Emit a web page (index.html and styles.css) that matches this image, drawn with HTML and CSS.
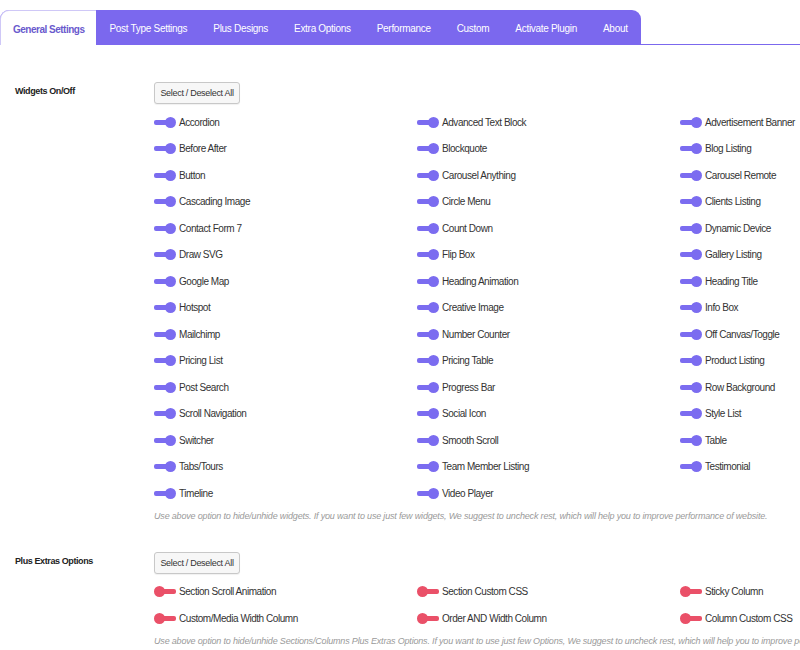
FILE: index.html
```html
<!DOCTYPE html>
<html lang="en">

<head>
  <meta charset="UTF-8">
  <meta name="viewport" content="width=device-width, initial-scale=1.0">
  <title>Plus Settings</title>
  <link rel="stylesheet" href="styles.css">
</head>

<body>
  <div class="wrap">
    <nav class="tabs">
      <ul>
        <li class="active"><a href="#general">General Settings</a></li>
        <li><a href="#post-type">Post Type Settings</a></li>
        <li><a href="#designs">Plus Designs</a></li>
        <li><a href="#extra">Extra Options</a></li>
        <li><a href="#performance">Performance</a></li>
        <li><a href="#custom">Custom</a></li>
        <li><a href="#activate">Activate Plugin</a></li>
        <li><a href="#about">About</a></li>
      </ul>
    </nav>

    <div class="section">
      <div class="section-label">Widgets On/Off</div>
      <div class="section-body">
        <button type="button" class="select-all">Select / Deselect All</button>
        <div class="switch-list">
          <label class="switch-item"><span class="toggle on"></span>Accordion</label>
          <label class="switch-item"><span class="toggle on"></span>Advanced Text Block</label>
          <label class="switch-item"><span class="toggle on"></span>Advertisement Banner</label>
          <label class="switch-item"><span class="toggle on"></span>Before After</label>
          <label class="switch-item"><span class="toggle on"></span>Blockquote</label>
          <label class="switch-item"><span class="toggle on"></span>Blog Listing</label>
          <label class="switch-item"><span class="toggle on"></span>Button</label>
          <label class="switch-item"><span class="toggle on"></span>Carousel Anything</label>
          <label class="switch-item"><span class="toggle on"></span>Carousel Remote</label>
          <label class="switch-item"><span class="toggle on"></span>Cascading Image</label>
          <label class="switch-item"><span class="toggle on"></span>Circle Menu</label>
          <label class="switch-item"><span class="toggle on"></span>Clients Listing</label>
          <label class="switch-item"><span class="toggle on"></span>Contact Form 7</label>
          <label class="switch-item"><span class="toggle on"></span>Count Down</label>
          <label class="switch-item"><span class="toggle on"></span>Dynamic Device</label>
          <label class="switch-item"><span class="toggle on"></span>Draw SVG</label>
          <label class="switch-item"><span class="toggle on"></span>Flip Box</label>
          <label class="switch-item"><span class="toggle on"></span>Gallery Listing</label>
          <label class="switch-item"><span class="toggle on"></span>Google Map</label>
          <label class="switch-item"><span class="toggle on"></span>Heading Animation</label>
          <label class="switch-item"><span class="toggle on"></span>Heading Title</label>
          <label class="switch-item"><span class="toggle on"></span>Hotspot</label>
          <label class="switch-item"><span class="toggle on"></span>Creative Image</label>
          <label class="switch-item"><span class="toggle on"></span>Info Box</label>
          <label class="switch-item"><span class="toggle on"></span>Mailchimp</label>
          <label class="switch-item"><span class="toggle on"></span>Number Counter</label>
          <label class="switch-item"><span class="toggle on"></span>Off Canvas/Toggle</label>
          <label class="switch-item"><span class="toggle on"></span>Pricing List</label>
          <label class="switch-item"><span class="toggle on"></span>Pricing Table</label>
          <label class="switch-item"><span class="toggle on"></span>Product Listing</label>
          <label class="switch-item"><span class="toggle on"></span>Post Search</label>
          <label class="switch-item"><span class="toggle on"></span>Progress Bar</label>
          <label class="switch-item"><span class="toggle on"></span>Row Background</label>
          <label class="switch-item"><span class="toggle on"></span>Scroll Navigation</label>
          <label class="switch-item"><span class="toggle on"></span>Social Icon</label>
          <label class="switch-item"><span class="toggle on"></span>Style List</label>
          <label class="switch-item"><span class="toggle on"></span>Switcher</label>
          <label class="switch-item"><span class="toggle on"></span>Smooth Scroll</label>
          <label class="switch-item"><span class="toggle on"></span>Table</label>
          <label class="switch-item"><span class="toggle on"></span>Tabs/Tours</label>
          <label class="switch-item"><span class="toggle on"></span>Team Member Listing</label>
          <label class="switch-item"><span class="toggle on"></span>Testimonial</label>
          <label class="switch-item"><span class="toggle on"></span>Timeline</label>
          <label class="switch-item"><span class="toggle on"></span>Video Player</label>
        </div>
        <p class="hint">Use above option to hide/unhide widgets. If you want to use just few widgets, We suggest to uncheck rest, which will help you to improve performance of website.</p>
      </div>
    </div>

    <div class="section">
      <div class="section-label">Plus Extras Options</div>
      <div class="section-body">
        <button type="button" class="select-all">Select / Deselect All</button>
        <div class="switch-list">
          <label class="switch-item"><span class="toggle off"></span>Section Scroll Animation</label>
          <label class="switch-item"><span class="toggle off"></span>Section Custom CSS</label>
          <label class="switch-item"><span class="toggle off"></span>Sticky Column</label>
          <label class="switch-item"><span class="toggle off"></span>Custom/Media Width Column</label>
          <label class="switch-item"><span class="toggle off"></span>Order AND Width Column</label>
          <label class="switch-item"><span class="toggle off"></span>Column Custom CSS</label>
        </div>
        <p class="hint">Use above option to hide/unhide Sections/Columns Plus Extras Options. If you want to use just few Options, We suggest to uncheck rest, which will help you to improve performance of website.</p>
      </div>
    </div>
  </div>
</body>

</html>
```

FILE: styles.css
```css
html,
body {
  overflow: hidden;
}

body {
  font-family: "Liberation Sans", Arial, sans-serif;
  margin: 0;
  padding: 0;
  font-size: 10px;
  color: #333;
  background-color: #fff;
}

.wrap {
  width: 800px;
  overflow: hidden;
}

.tabs {
  margin-top: 10px;
  border-bottom: 1px solid #7b68ee;
}

.tabs ul {
  list-style-type: none;
  margin: 0;
  padding: 0;
  display: inline-flex;
  background-color: #7b68ee;
  border-radius: 9px 9px 0 0;
  height: 34px;
}

.tabs li {
  display: flex;
  align-items: center;
}

.tabs li a {
  color: #fff;
  text-decoration: none;
  font-size: 10px;
  letter-spacing: -0.3px;
  padding: 2px 13px 0;
}

.tabs li.active {
  background-color: #fff;
  border-top: 1px solid #cfc8f7;
  border-left: 1px solid #cfc8f7;
  border-radius: 9px 0 0 0;
  margin-bottom: -1px;
}

.tabs li.active a {
  color: #6a5acd;
  font-weight: bold;
  letter-spacing: -0.5px;
  padding: 2px 12px 0;
}

.section {
  display: flex;
  padding: 37px 0 0 15px;
}

.section + .section {
  padding-top: 29px;
}

.section-label {
  width: 139px;
  flex-shrink: 0;
  font-size: 9px;
  font-weight: bold;
  color: #222;
  padding-top: 2px;
  line-height: 14px;
  letter-spacing: -0.4px;
}

.section-body {
  width: 900px;
  flex-shrink: 0;
}

.select-all {
  font-family: inherit;
  font-size: 9px;
  letter-spacing: -0.3px;
  color: #333;
  background-color: #f7f7f7;
  border: 1px solid #c8c8c8;
  border-radius: 3px;
  height: 22px;
  width: 86px;
  padding: 0;
  cursor: pointer;
  box-shadow: 0 1px 1px rgba(0, 0, 0, 0.06);
}

.switch-list {
  display: grid;
  grid-template-columns: repeat(3, 263px);
  grid-auto-rows: 26.5px;
  margin-top: 5px;
}

.switch-item {
  display: flex;
  align-items: center;
  gap: 3px;
  letter-spacing: -0.45px;
  color: #333;
}

.toggle {
  display: inline-flex;
  align-items: center;
  width: 22px;
  flex-shrink: 0;
}

.toggle::before {
  content: "";
  width: 14px;
  height: 5px;
  border-radius: 2px;
}

.toggle::after {
  content: "";
  width: 11px;
  height: 11px;
  border-radius: 50%;
  margin-left: -3px;
}

.toggle.on::before,
.toggle.on::after {
  background-color: #7b6cf0;
}

.toggle.off {
  flex-direction: row-reverse;
  justify-content: flex-end;
}

.toggle.off::after {
  margin-left: 0;
  margin-right: -3px;
}

.toggle.off::before,
.toggle.off::after {
  background-color: #ea5068;
}

.hint {
  margin: 2px 0 0;
  font-size: 9px;
  line-height: 14px;
  letter-spacing: -0.18px;
  font-style: italic;
  color: #9a9a9a;
  white-space: nowrap;
}
```
